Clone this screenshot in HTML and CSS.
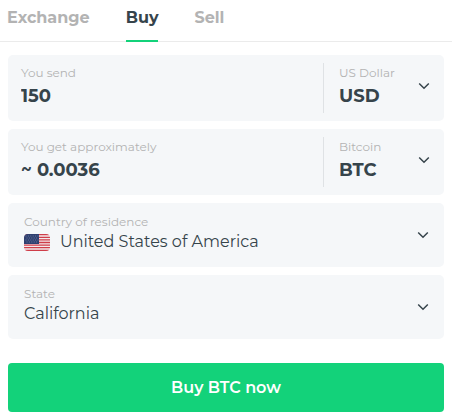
FILE: index.html
```html
<!DOCTYPE html>
<html lang="en">
    <head>
        <meta charset="UTF-8">
        <meta name="viewport" content="width=device-width, initial-scale=1.0">
        <link rel="stylesheet" href="styles.css">
        <title>Buy BTC</title>
    </head>
    <body>
        <!-- tabs -->
        <nav class="tabs">
            <a class="tab" href="#exchange">Exchange</a>
            <a class="tab active" href="#buy" aria-current="page">Buy</a>
            <a class="tab" href="#sell">Sell</a>
        </nav>

        <form class="buyForm">
            <!-- amounts -->
            <div class="box amountBox">
                <div class="amount">
                    <label class="label" for="send">You send</label>
                    <input class="value" type="text" id="send" name="send" value="150">
                </div>
                <div class="currency">
                    <label class="label" for="sendCurrency">US Dollar</label>
                    <select class="value" id="sendCurrency" name="sendCurrency">
                        <option>USD</option>
                    </select>
                    <svg class="arrow" viewBox="0 0 12 8" aria-hidden="true"><path d="M1.2 1.5 6 6.2l4.8-4.7"/></svg>
                </div>
            </div>

            <div class="box amountBox">
                <div class="amount">
                    <label class="label" for="get">You get approximately</label>
                    <input class="value" type="text" id="get" name="get" value="~ 0.0036" readonly>
                </div>
                <div class="currency">
                    <label class="label" for="getCurrency">Bitcoin</label>
                    <select class="value" id="getCurrency" name="getCurrency">
                        <option>BTC</option>
                    </select>
                    <svg class="arrow" viewBox="0 0 12 8" aria-hidden="true"><path d="M1.2 1.5 6 6.2l4.8-4.7"/></svg>
                </div>
            </div>

            <!-- residence -->
            <div class="box placeBox">
                <div class="place">
                    <label class="label" for="country">Country of residence</label>
                    <div class="placeValue">
                        <svg class="flag" viewBox="0 0 26 17" aria-hidden="true">
                            <defs>
                                <clipPath id="flagShape"><rect width="26" height="17" rx="4"/></clipPath>
                            </defs>
                            <g clip-path="url(#flagShape)">
                                <rect width="26" height="17" fill="#f3e9eb"/>
                                <path d="M0 .7h26M0 3.3h26M0 5.9h26M0 8.5h26M0 11.1h26M0 13.7h26M0 16.3h26" stroke="#cf3d49" stroke-width="1.3"/>
                                <rect width="15" height="10" fill="#2f4070"/>
                                <path d="M1.5 2h13M2.5 4h12M1.5 6h13M2.5 8h12" stroke="#7785a8" stroke-width=".8" stroke-dasharray="1 1.4"/>
                            </g>
                        </svg>
                        <select class="placeName" id="country" name="country">
                            <option>United States of America</option>
                        </select>
                    </div>
                </div>
                <svg class="arrow" viewBox="0 0 12 8" aria-hidden="true"><path d="M1.2 1.5 6 6.2l4.8-4.7"/></svg>
            </div>

            <div class="box placeBox">
                <div class="place">
                    <label class="label" for="state">State</label>
                    <div class="placeValue">
                        <select class="placeName" id="state" name="state">
                            <option>California</option>
                        </select>
                    </div>
                </div>
                <svg class="arrow" viewBox="0 0 12 8" aria-hidden="true"><path d="M1.2 1.5 6 6.2l4.8-4.7"/></svg>
            </div>

            <button class="submitButton" type="submit">Buy BTC now</button>
        </form>
    </body>
</html>
```
FILE: styles.css
```css
*{
    box-sizing: border-box;
}

body{
    margin: 0;
    font-family: Montserrat, Inter, sans-serif;
    background-color: white;
    color: #36444b;
}

input, select{
    display: block;
    width: 100%;
    min-width: 0;
    margin: 0;
    padding: 0;
    border: none;
    background: none;
    color: inherit;
    font-family: inherit;
    appearance: none;
}

/* tabs */
.tabs{
    display: flex;
    gap: 36px;
    padding: 0 7px;
    border-bottom: 1px solid #ebebeb;
}

.tab{
    height: 42px;
    margin-bottom: -1px;
    padding-top: 7px;
    color: #b3b3b3;
    font-size: 16px;
    font-weight: 700;
    line-height: 22px;
    text-decoration: none;
}

.tab.active{
    border-bottom: 2px solid #13d27a;
    color: #36444b;
}

/* form */
.buyForm{
    display: flex;
    flex-direction: column;
    gap: 8px;
    padding: 13px 8px 5px;
}

.box{
    display: flex;
    background-color: #f5f7f9;
    border-radius: 5px;
}

.label{
    display: block;
    color: #b3b3b3;
    font-size: 12px;
    line-height: 20px;
}

.value{
    height: 26px;
    font-size: 18px;
    font-weight: 700;
    line-height: 26px;
}

.arrow{
    width: 12px;
    height: 8px;
    fill: none;
    stroke: #36444b;
    stroke-width: 1.5;
    pointer-events: none;
}

/* amount and currency */
.amountBox{
    padding: 8px 0;
}

.amount{
    flex: 1;
    min-width: 0;
    padding: 0 13px 4px;
}

.currency{
    display: grid;
    grid-template-columns: 1fr 12px;
    width: 121px;
    padding: 0 14px 4px 15px;
    border-left: 1px solid #dfe2e5;
}

.currency .arrow{
    grid-column: 2;
    grid-row: 1 / 3;
    align-self: center;
}

.currency .value{
    grid-column: 1;
}

/* country and state */
.placeBox{
    align-items: center;
    padding: 9px 15px 9px 16px;
}

.place{
    flex: 1;
    min-width: 0;
    padding-bottom: 6px;
}

.placeValue{
    display: flex;
    align-items: center;
    gap: 10px;
}

.flag{
    flex: none;
    width: 26px;
    height: 17px;
}

.placeName{
    height: 20px;
    font-size: 16px;
    font-weight: 400;
    line-height: 20px;
}

/* submit */
.submitButton{
    height: 49px;
    margin-top: 16px;
    padding: 0;
    border: none;
    border-radius: 4px;
    background-color: #13d27a;
    color: white;
    font-family: inherit;
    font-size: 16px;
    font-weight: 600;
    cursor: pointer;
}
```
